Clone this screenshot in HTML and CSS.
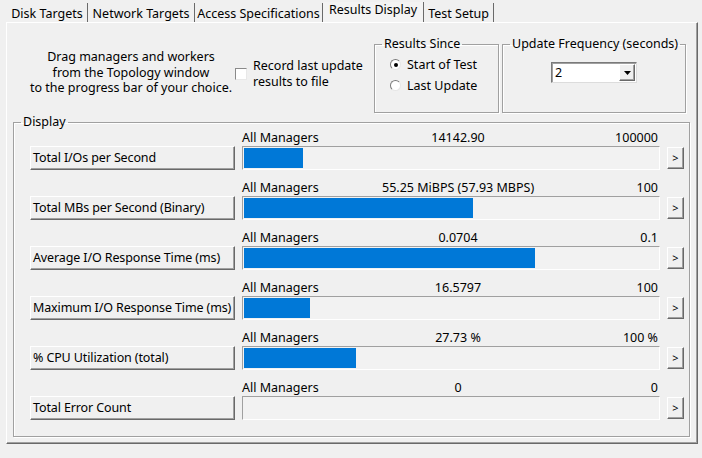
FILE: index.html
```html
<!DOCTYPE html>
<html>
<head>
<meta charset="utf-8">
<link rel="stylesheet" href="styles.css">
</head>
<body>
<div class="window">
  <div class="tabs">
    <div class="tab t1">Disk Targets</div>
    <div class="tab t2">Network Targets</div>
    <div class="tab t3">Access Specifications</div>
    <div class="tab t4 active">Results Display</div>
    <div class="tab t5">Test Setup</div>
  </div>
  <div class="panel">
    <div class="top">
      <div class="hint">Drag managers and workers<br>from the Topology window<br>to the progress bar of your choice.</div>
      <div class="record"><span class="check"></span><span class="record-text">Record last update<br>results to file</span></div>
      <fieldset class="group since">
        <legend>Results Since</legend>
        <div class="radios">
          <div class="radio"><span class="circle on"></span>Start of Test</div>
          <div class="radio"><span class="circle"></span>Last Update</div>
        </div>
      </fieldset>
      <fieldset class="group freq">
        <legend>Update Frequency (seconds)</legend>
        <div class="combo"><span class="combo-val">2</span><span class="drop"><svg width="7" height="4" viewBox="0 0 7 4"><path d="M0 0H7L3.5 4Z" fill="#000"/></svg></span></div>
      </fieldset>
    </div>
    <fieldset class="group display">
      <legend>Display</legend>
      <div class="rows">
        <div class="row">
          <div class="caption"><span>All Managers</span><span class="mid">14142.90</span><span class="max">100000</span></div>
          <div class="btn">Total I/Os per Second</div>
          <div class="bar"><div class="fill" style="width:14.14%"></div></div>
          <div class="more">&gt;</div>
        </div>
        <div class="row">
          <div class="caption"><span>All Managers</span><span class="mid">55.25 MiBPS (57.93 MBPS)</span><span class="max">100</span></div>
          <div class="btn">Total MBs per Second (Binary)</div>
          <div class="bar"><div class="fill" style="width:55.25%"></div></div>
          <div class="more">&gt;</div>
        </div>
        <div class="row">
          <div class="caption"><span>All Managers</span><span class="mid">0.0704</span><span class="max">0.1</span></div>
          <div class="btn">Average I/O Response Time (ms)</div>
          <div class="bar"><div class="fill" style="width:70.4%"></div></div>
          <div class="more">&gt;</div>
        </div>
        <div class="row">
          <div class="caption"><span>All Managers</span><span class="mid">16.5797</span><span class="max">100</span></div>
          <div class="btn">Maximum I/O Response Time (ms)</div>
          <div class="bar"><div class="fill" style="width:16.0%"></div></div>
          <div class="more">&gt;</div>
        </div>
        <div class="row">
          <div class="caption"><span>All Managers</span><span class="mid">27.73 %</span><span class="max">100 %</span></div>
          <div class="btn">% CPU Utilization (total)</div>
          <div class="bar"><div class="fill" style="width:27.0%"></div></div>
          <div class="more">&gt;</div>
        </div>
        <div class="row">
          <div class="caption"><span>All Managers</span><span class="mid">0</span><span class="max">0</span></div>
          <div class="btn">Total Error Count</div>
          <div class="bar"><div class="fill" style="width:0%"></div></div>
          <div class="more">&gt;</div>
        </div>
      </div>
    </fieldset>
  </div>
</div>
</body>
</html>
```
FILE: styles.css
```css
* { box-sizing: border-box; }
html, body {
  margin: 0;
  padding: 0;
  background: #f0f0f0;
}
body {
  width: 702px;
  height: 458px;
  overflow: hidden;
  font-family: "Noto Sans", "Open Sans", sans-serif;
  font-size: 12.5px;
  color: #000;
}
.window {
  width: 702px;
}
.tabs {
  display: flex;
  height: 22px;
  padding-left: 7px;
}
.tab {
  margin-top: 3px;
  height: 19px;
  border-right: 1px solid #6a6a6a;
  text-align: center;
  line-height: 16px;
  padding-top: 3px;
  white-space: nowrap;
}
.tab.active {
  padding-top: 0;
  margin-top: 2px;
  height: 20px;
  background: #f3f3f3;
}
.t1 { width: 81px; }
.t2 { width: 107px; }
.t3 { width: 128px; }
.t4 { width: 101px; }
.t5 { width: 70px; }

.panel {
  margin-left: 6px;
  width: 692px;
  border-left: 1px solid #ffffff;
  border-top: 1px solid #ffffff;
  border-right: 1px solid #696969;
  border-bottom: 1px solid #696969;
  box-shadow: inset -1px -1px 0 #a0a0a0;
  padding-bottom: 6px;
}
.top {
  display: flex;
  align-items: flex-start;
  height: 90px;
}
.hint {
  margin-left: 21px;
  margin-top: 26px;
  width: 206px;
  text-align: center;
  line-height: 15.5px;
  white-space: nowrap;
}
.record {
  margin-left: 1px;
  margin-top: 35px;
  width: 139px;
  display: flex;
  align-items: center;
}
.check {
  width: 12px;
  height: 12px;
  flex: none;
  background: #fff;
  border: 1px solid;
  border-color: #8a8a8a #e8e8e8 #e8e8e8 #8a8a8a;
  margin-right: 6px;
}
.record-text {
  white-space: nowrap;
  line-height: 15.5px;
}

.group {
  margin: 0;
  padding: 0;
  min-width: 0;
  border: 1px solid #a0a0a0;
  box-shadow: inset 1px 1px 0 #ffffff, 1px 1px 0 #ffffff;
}
.group legend {
  padding: 0 2px;
  margin-left: 7px;
  line-height: 16px;
  white-space: nowrap;
}
.since {
  margin-top: 13px;
  margin-left: 0;
  width: 125px;
  height: 77px;
}
.radios {
  margin: 2px 0 0 15px;
}
.radio {
  display: flex;
  align-items: center;
  height: 21px;
  white-space: nowrap;
}
.circle {
  position: relative;
  width: 11px;
  height: 11px;
  border-radius: 50%;
  border: 1px solid;
  border-color: #7a7a7a #e6e6e6 #e6e6e6 #7a7a7a;
  background: #fff;
  margin-right: 6px;
  flex: none;
}
.circle.on::after {
  content: "";
  position: absolute;
  left: 2.5px;
  top: 2.5px;
  width: 4px;
  height: 4px;
  border-radius: 50%;
  background: #000;
}
.freq {
  margin-top: 13px;
  margin-left: 3px;
  width: 184px;
  height: 77px;
}
.combo {
  margin: 10px 0 0 48px;
  width: 86px;
  height: 21px;
  background: #fff;
  border: 1px solid;
  border-color: #7a7a7a #dcdcdc #dcdcdc #7a7a7a;
  box-shadow: inset 1px 1px 0 #a0a0a0;
  display: flex;
  align-items: center;
  justify-content: space-between;
  padding: 1px 1px 1px 3px;
}
.combo-val { line-height: 16px; }
.drop {
  width: 16px;
  height: 17px;
  background: #f0f0f0;
  border: 1px solid;
  border-color: #ffffff #696969 #696969 #ffffff;
  box-shadow: inset -1px -1px 0 #a0a0a0;
  display: flex;
  align-items: center;
  justify-content: center;
}
.drop svg { display: block; }

.display {
  margin: 1px 7px 0 6px;
  padding: 0;
}
.rows {
  padding: 0 0 16px 16px;
}
.row {
  display: grid;
  grid-template-columns: 205px 418px 17px;
  grid-template-rows: 16px 24px;
  column-gap: 7px;
  margin-bottom: 10px;
}
.row:last-child { margin-bottom: 0; }
.caption {
  grid-column: 2;
  grid-row: 1;
  display: grid;
  grid-template-columns: 140px 152px 1fr;
  line-height: 16px;
  white-space: nowrap;
}
.caption .mid { text-align: center; }
.caption .max { text-align: right; padding-right: 2px; }
.btn {
  grid-column: 1;
  grid-row: 2;
  height: 24px;
  line-height: 22px;
  padding-left: 2px;
  letter-spacing: -0.12px;
  border: 1px solid;
  border-color: #ffffff #696969 #696969 #ffffff;
  box-shadow: inset -1px -1px 0 #a0a0a0;
  white-space: nowrap;
}
.bar {
  grid-column: 2;
  grid-row: 2;
  height: 24px;
  border: 1px solid;
  border-color: #a0a0a0 #ffffff #ffffff #a0a0a0;
  padding: 1px;
  background: #f2f2f2;
}
.fill {
  height: 100%;
  background: #0078d7;
}
.more {
  grid-column: 3;
  grid-row: 2;
  align-self: start;
  margin-top: 1px;
  height: 22px;
  border: 1px solid;
  border-color: #ffffff #696969 #696969 #ffffff;
  box-shadow: inset -1px -1px 0 #a0a0a0;
  font-size: 11px;
  line-height: 19px;
  text-align: center;
}
```
